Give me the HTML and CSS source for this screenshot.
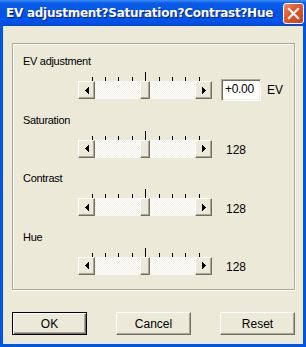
FILE: index.html
```html
<!DOCTYPE html>
<html lang="en">
<head>
    <meta charset="UTF-8">
    <title>EV adjustment?Saturation?Contrast?Hue</title>
    <link rel="stylesheet" href="styles.css">
</head>
<body>
    <div class="window">
        <div class="titlebar">
            <span class="title">EV adjustment?Saturation?Contrast?Hue</span>
            <div class="close">
                <svg width="13" height="13" viewBox="0 0 13 13">
                    <path d="M2 2L11 11M11 2L2 11" stroke="#fff" stroke-width="2.2" stroke-linecap="square"/>
                </svg>
            </div>
        </div>

        <div class="client">
            <div class="group">
                <div class="row">
                    <div class="label">EV adjustment</div>
                    <div class="ticks"><span></span><span></span><span></span><span></span><span class="long"></span><span></span><span></span><span></span><span></span></div>
                    <div class="control">
                        <div class="slider">
                            <div class="arrow-btn"><svg width="4" height="7"><path d="M3 0h1v7h-1zM2 1h1v5h-1zM1 2h1v3h-1zM0 3h1v1h-1z"/></svg></div>
                            <div class="track"><div class="thumb"></div></div>
                            <div class="arrow-btn"><svg width="4" height="7"><path d="M0 0h1v7h-1zM1 1h1v5h-1zM2 2h1v3h-1zM3 3h1v1h-1z"/></svg></div>
                        </div>
                        <div class="edit">+0.00</div>
                        <span class="unit">EV</span>
                    </div>
                </div>

                <div class="row">
                    <div class="label">Saturation</div>
                    <div class="ticks"><span></span><span></span><span></span><span></span><span class="long"></span><span></span><span></span><span></span><span></span></div>
                    <div class="control">
                        <div class="slider">
                            <div class="arrow-btn"><svg width="4" height="7"><path d="M3 0h1v7h-1zM2 1h1v5h-1zM1 2h1v3h-1zM0 3h1v1h-1z"/></svg></div>
                            <div class="track"><div class="thumb"></div></div>
                            <div class="arrow-btn"><svg width="4" height="7"><path d="M0 0h1v7h-1zM1 1h1v5h-1zM2 2h1v3h-1zM3 3h1v1h-1z"/></svg></div>
                        </div>
                        <span class="value">128</span>
                    </div>
                </div>

                <div class="row">
                    <div class="label">Contrast</div>
                    <div class="ticks"><span></span><span></span><span></span><span></span><span class="long"></span><span></span><span></span><span></span><span></span></div>
                    <div class="control">
                        <div class="slider">
                            <div class="arrow-btn"><svg width="4" height="7"><path d="M3 0h1v7h-1zM2 1h1v5h-1zM1 2h1v3h-1zM0 3h1v1h-1z"/></svg></div>
                            <div class="track"><div class="thumb"></div></div>
                            <div class="arrow-btn"><svg width="4" height="7"><path d="M0 0h1v7h-1zM1 1h1v5h-1zM2 2h1v3h-1zM3 3h1v1h-1z"/></svg></div>
                        </div>
                        <span class="value">128</span>
                    </div>
                </div>

                <div class="row">
                    <div class="label">Hue</div>
                    <div class="ticks"><span></span><span></span><span></span><span></span><span class="long"></span><span></span><span></span><span></span><span></span></div>
                    <div class="control">
                        <div class="slider">
                            <div class="arrow-btn"><svg width="4" height="7"><path d="M3 0h1v7h-1zM2 1h1v5h-1zM1 2h1v3h-1zM0 3h1v1h-1z"/></svg></div>
                            <div class="track"><div class="thumb"></div></div>
                            <div class="arrow-btn"><svg width="4" height="7"><path d="M0 0h1v7h-1zM1 1h1v5h-1zM2 2h1v3h-1zM3 3h1v1h-1z"/></svg></div>
                        </div>
                        <span class="value">128</span>
                    </div>
                </div>
            </div>

            <div class="buttons">
                <div class="btn default"><span>OK</span></div>
                <div class="btn"><span>Cancel</span></div>
                <div class="btn"><span>Reset</span></div>
            </div>
        </div>
    </div>
</body>
</html>
```

FILE: styles.css
```css
:root {
    --face: #ece9d8;
    --dark: #716f64;
    --shadow: #aca899;
    --frame: #0055e5;
}

* {
    margin: 0;
    padding: 0;
    box-sizing: border-box;
}

body {
    font-family: "Liberation Sans", Arial, sans-serif;
    font-size: 10.5px;
    color: #000;
    background: var(--frame);
}

.window {
    width: 306px;
    height: 347px;
    display: flex;
    flex-direction: column;
}

/* Title bar */
.titlebar {
    height: 26px;
    display: flex;
    align-items: center;
    justify-content: space-between;
    padding: 0 2px 0 6px;
    background: linear-gradient(to bottom, #3d8ef7 0, #0b5de8 3px, #0055e5 45%, #0052ea 85%, #0046d5 100%);
}

.title {
    color: #fff;
    font-family: "DejaVu Sans", sans-serif;
    font-weight: bold;
    font-size: 12px;
    letter-spacing: -0.25px;
    text-shadow: 1px 1px 0 #0a1a8a;
}

.close {
    width: 21px;
    height: 21px;
    border: 1px solid #fff;
    border-radius: 3px;
    background: linear-gradient(135deg, #f08a6a 0%, #e2582f 40%, #c8401b 100%);
    display: flex;
    align-items: center;
    justify-content: center;
}

/* Client area */
.client {
    flex: 1;
    margin: 0 3px 3px 3px;
    background: var(--face);
    padding: 17px 8px 9px 9px;
    display: flex;
    flex-direction: column;
}

.group {
    height: 247px;
    border: 1px solid var(--shadow);
    box-shadow: inset 1px 1px 0 #fff, 1px 1px 0 #fff;
    padding: 11px 0 0 10px;
    display: flex;
    flex-direction: column;
    gap: 14.5px;
}

.row {
    display: flex;
    flex-direction: column;
}

.label {
    line-height: 13px;
    height: 13px;
    font-size: 11px;
    letter-spacing: -0.3px;
}

.ticks {
    margin: 4px 0 0 68.7px;
    width: 108px;
    height: 9px;
    display: flex;
    justify-content: space-between;
    align-items: flex-end;
}

.ticks span {
    width: 1px;
    height: 4px;
    background: #000;
}

.ticks span.long {
    height: 9px;
}

.control {
    height: 18px;
    margin-left: 55px;
    display: flex;
    align-items: center;
}

.slider {
    width: 134px;
    height: 18px;
    display: flex;
}

.arrow-btn {
    width: 17px;
    height: 18px;
    background: var(--face);
    border: 1px solid;
    border-color: #fff var(--dark) var(--dark) #fff;
    box-shadow: inset -1px -1px 0 var(--shadow);
    display: flex;
    align-items: center;
    justify-content: center;
}

.track {
    flex: 1;
    display: flex;
    justify-content: center;
    background: repeating-conic-gradient(#fff 0 25%, #f1efe6 0 50%) 0 0 / 2px 2px;
}

.thumb {
    width: 10px;
    height: 18px;
    background: var(--face);
    border: 1px solid;
    border-color: #fff var(--dark) var(--dark) #fff;
    box-shadow: inset -1px -1px 0 var(--shadow);
}

.edit {
    margin-left: 9px;
    width: 40px;
    height: 22px;
    flex-shrink: 0;
    background: #fff;
    border: 1px solid;
    border-color: var(--shadow) #fff #fff var(--shadow);
    box-shadow: inset 1px 1px 0 var(--dark), inset -1px -1px 0 #f1efe2;
    padding: 2px 0 0 3px;
    line-height: 14px;
    font-size: 12px;
    letter-spacing: -0.3px;
}

.unit {
    margin-left: 6px;
    font-size: 12px;
}

.value {
    margin-left: 14px;
    padding-top: 3px;
    font-size: 12px;
}

/* Buttons */
.buttons {
    margin-top: 22px;
    display: flex;
    justify-content: space-between;
}

.btn {
    width: 75px;
    height: 23px;
    display: flex;
    align-items: center;
    justify-content: center;
    background: var(--face);
    border: 1px solid;
    border-color: #fff var(--dark) var(--dark) #fff;
    box-shadow: inset -1px -1px 0 var(--shadow);
    font-size: 12px;
}

.btn.default {
    border: 1px solid #000;
    box-shadow: inset 1px 1px 0 #fff, inset -1px -1px 0 var(--dark), inset -2px -2px 0 var(--shadow);
}
```
